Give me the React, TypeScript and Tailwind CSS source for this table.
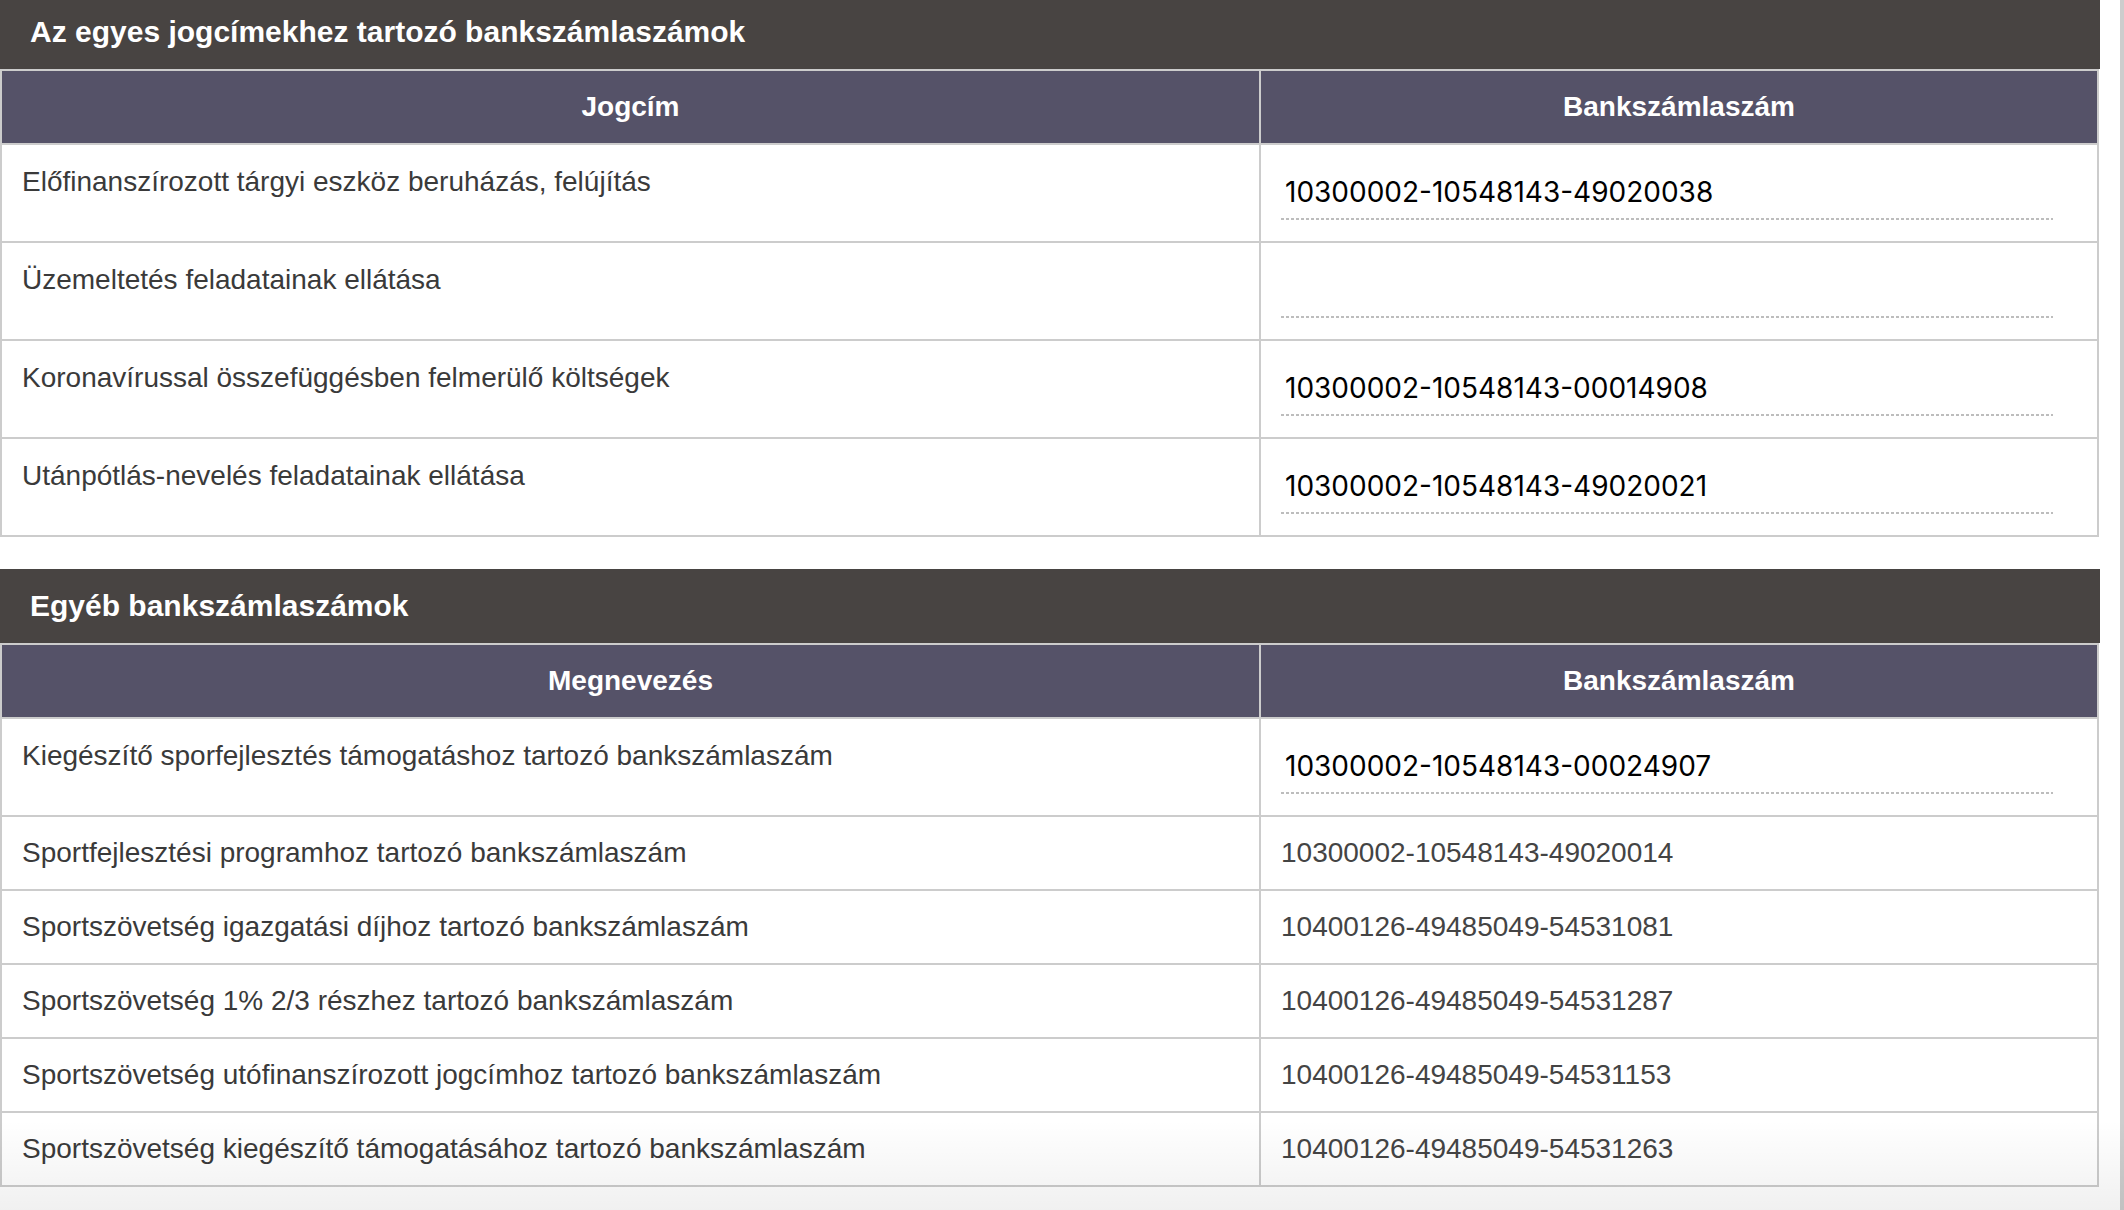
const jogcimRows = [
  { name: "Előfinanszírozott tárgyi eszköz beruházás, felújítás", account: "10300002-10548143-49020038" },
  { name: "Üzemeltetés feladatainak ellátása", account: "" },
  { name: "Koronavírussal összefüggésben felmerülő költségek", account: "10300002-10548143-00014908" },
  { name: "Utánpótlás-nevelés feladatainak ellátása", account: "10300002-10548143-49020021" },
]

const otherInput = { name: "Kiegészítő sporfejlesztés támogatáshoz tartozó bankszámlaszám", account: "10300002-10548143-00024907" }

const otherRows = [
  { name: "Sportfejlesztési programhoz tartozó bankszámlaszám", account: "10300002-10548143-49020014" },
  { name: "Sportszövetség igazgatási díjhoz tartozó bankszámlaszám", account: "10400126-49485049-54531081" },
  { name: "Sportszövetség 1% 2/3 részhez tartozó bankszámlaszám", account: "10400126-49485049-54531287" },
  { name: "Sportszövetség utófinanszírozott jogcímhoz tartozó bankszámlaszám", account: "10400126-49485049-54531153" },
  { name: "Sportszövetség kiegészítő támogatásához tartozó bankszámlaszám", account: "10400126-49485049-54531263" },
]

function SectionTitle({ title }: { title: string }) {
  return (
    <div className="h-[74px] w-[2100px] bg-[#484442] flex items-center px-[30px]">
      <h2 className="text-[30px] font-bold text-white leading-none">{title}</h2>
    </div>
  )
}

function HeadRow({ left }: { left: string }) {
  return (
    <div className="grid grid-cols-[1259px_1fr] h-[72px] bg-[#555268] text-white text-[28px] font-bold">
      <div className="border-r-2 border-[#ccc] flex items-center justify-center">{left}</div>
      <div className="flex items-center justify-center">Bankszámlaszám</div>
    </div>
  )
}

function InputRow({ name, account }: { name: string; account: string }) {
  return (
    <div className="grid grid-cols-[1259px_1fr] h-[98px] border-t-2 border-[#ccc] bg-white">
      <div className="border-r-2 border-[#ccc] px-5 pt-[17px] text-[28px] leading-[40px] text-[#3a3a3a]">{name}</div>
      <div className="px-5 pt-[30px]">
        <div className="w-[772px]">
          <div className="h-[43px] pl-[4px] text-[28px] leading-[34px] text-black font-['Inter',sans-serif]">{account}</div>
          {/* dotted underline of the input */}
          <div className="h-[2px] bg-[repeating-linear-gradient(90deg,#bdbdbd_0px,#bdbdbd_3px,transparent_3px,transparent_5px)]" />
        </div>
      </div>
    </div>
  )
}

function TextRow({ name, account }: { name: string; account: string }) {
  return (
    <div className="grid grid-cols-[1259px_1fr] h-[74px] border-t-2 border-[#ccc] bg-white text-[28px] leading-[40px]">
      <div className="border-r-2 border-[#ccc] px-5 flex items-center text-[#3a3a3a]">{name}</div>
      <div className="px-5 flex items-center text-[#444]">{account}</div>
    </div>
  )
}

export default function App() {
  return (
    <div className="relative w-[2124px] h-[1210px] overflow-hidden bg-white font-['Liberation_Sans',Arial,sans-serif]">
      <div className="flex h-full">
        <div className="w-[2100px] -mt-[5px]">
          <SectionTitle title="Az egyes jogcímekhez tartozó bankszámlaszámok" />
          <div className="w-[2099px] border-2 border-[#ccc]">
            <HeadRow left="Jogcím" />
            {jogcimRows.map((r) => (
              <InputRow key={r.name} name={r.name} account={r.account} />
            ))}
          </div>

          <div className="mt-[32px]">
            <SectionTitle title="Egyéb bankszámlaszámok" />
            <div className="w-[2099px] border-2 border-[#ccc]">
              <HeadRow left="Megnevezés" />
              <InputRow name={otherInput.name} account={otherInput.account} />
              {otherRows.map((r) => (
                <TextRow key={r.name} name={r.name} account={r.account} />
              ))}
            </div>
          </div>
        </div>
        <div className="flex-1" />
        <div className="w-[4px] bg-[#cdcdcd]" />
      </div>
      {/* bottom fade of the page */}
      <div className="pointer-events-none absolute left-0 right-0 bottom-0 h-[90px] bg-gradient-to-b from-transparent to-[rgba(0,0,0,0.06)]" />
    </div>
  )
}
